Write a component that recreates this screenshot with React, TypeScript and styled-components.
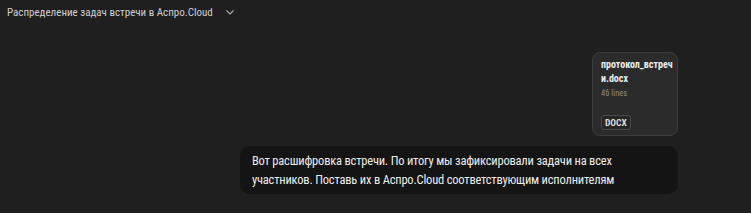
import React from "react";
import styled, { createGlobalStyle } from "styled-components";

const GlobalStyle = createGlobalStyle`
  html, body {
    margin: 0;
    padding: 0;
    background: #1f1f1f;
  }
  body {
    font-family: "Roboto Condensed", "Roboto", sans-serif;
  }
`;

const App: React.FC = (): React.ReactElement => {
  return (
    <Page>
      <GlobalStyle />
      <Header>
        <Title>Распределение задач встречи в Аспро.Cloud</Title>
        <Chevron viewBox="0 0 12 12">
          <path d="M2.5 4.5 L6 8 L9.5 4.5" />
        </Chevron>
      </Header>
      <Thread>
        <FileCard>
          <FileName>протокол_встреч<br />и.docx</FileName>
          <FileMeta>46 lines</FileMeta>
          <Badge>DOCX</Badge>
        </FileCard>
        <Bubble>
          Вот расшифровка встречи. По итогу мы зафиксировали задачи на всех
          участников. Поставь их в Аспро.Cloud соответствующим исполнителям
        </Bubble>
      </Thread>
    </Page>
  );
};

const Page = styled.div`
  width: 751px;
  height: 213px;
  background: #1f1f1f;
  overflow: hidden;
`;

const Header = styled.div`
  display: flex;
  align-items: center;
  gap: 11px;
  height: 24px;
  padding: 0 7px;
`;

const Title = styled.div`
  color: #cfcfcf;
  font-size: 11px;
`;

const Chevron = styled.svg`
  flex: none;
  width: 12px;
  height: 12px;
  fill: none;
  stroke: #a8a8a8;
  stroke-width: 1.2;
`;

const Thread = styled.div`
  display: flex;
  flex-direction: column;
  align-items: flex-end;
  gap: 10px;
  padding: 28px 73px 0 0;
`;

const FileCard = styled.div`
  box-sizing: border-box;
  width: 86px;
  height: 84px;
  padding: 5px 8px 5px;
  display: flex;
  flex-direction: column;
  background: #2b2b2b;
  border: 1px solid #3c3c3c;
  border-radius: 8px;
`;

const FileName = styled.div`
  color: #ececec;
  font-size: 10px;
  font-weight: 700;
  line-height: 14px;
`;

const FileMeta = styled.div`
  color: #8a8a8a;
  font-size: 8.5px;
  margin-top: 2px;
`;

const Badge = styled.div`
  margin-top: auto;
  align-self: flex-start;
  padding: 1px 3px;
  color: #dcdcdc;
  font-size: 9.5px;
  font-weight: 700;
  border: 1px solid #4a4a4a;
  border-radius: 3px;
  background: #262626;
`;

const Bubble = styled.div`
  box-sizing: border-box;
  width: 438px;
  padding: 5px 12px 5px;
  background: #141414;
  border-radius: 10px;
  color: #ececec;
  font-size: 12.5px;
  letter-spacing: -0.2px;
  line-height: 19px;
`;

export default App;
